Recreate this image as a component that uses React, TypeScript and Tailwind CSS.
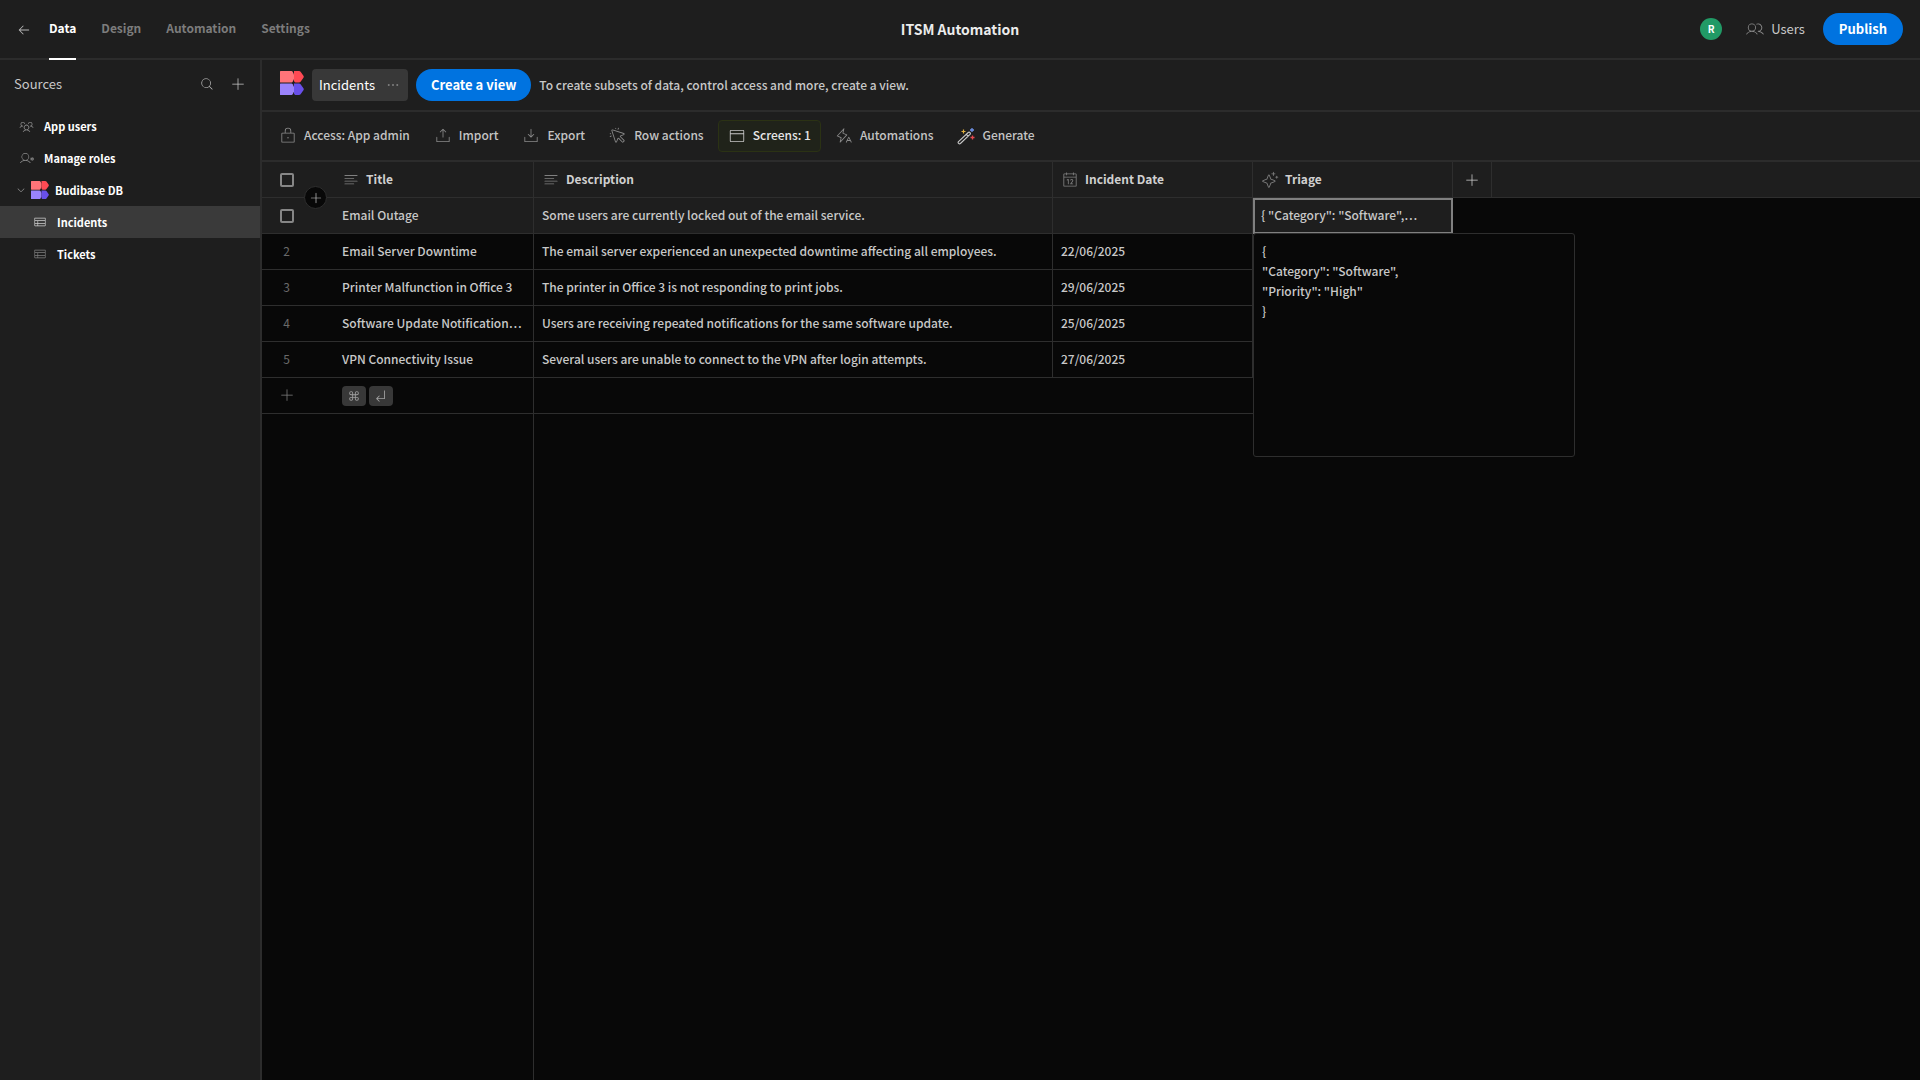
import type { ReactNode } from "react";
import {
  PiArrowElbowDownLeft, PiArrowLeft, PiBrowserLight, PiCalendarLight, PiCaretDownLight, PiCommand,
  PiCursorClickLight, PiDotsThreeBold, PiDownloadSimpleLight, PiLightningALight, PiLockLight,
  PiMagnifyingGlassLight, PiPlusLight, PiSparkleLight, PiTableLight, PiTextAlignLeftLight,
  PiUploadSimpleLight, PiUserGearLight, PiUsersLight, PiUsersThreeLight,
} from "react-icons/pi";

function Logo({ className }: { className: string }) {
  return (
    <svg viewBox="0 0 24 24" className={className} aria-hidden="true">
      <path d="M0 .5Q0 0 .5 0H11.500Q12.300 0 12.700 .8L14 3.500V8L12.700 10.700Q12.300 11.500 11.500 11.500H.5Q0 11.500 0 11Z" fill="#ff7479" />
      <path d="M14 0H19Q20 0 20.600 .8L23.600 5Q24 5.750 23.600 6.500L20.600 10.700Q20 11.500 19 11.500H15.500Q14.800 11.500 14.400 10.700L14 10Z" fill="#ff4a54" />
      <path d="M0 13Q0 12.500 .5 12.500H11.500Q12.300 12.500 12.700 13.300L14 16V20.500L12.700 23.200Q12.300 24 11.500 24H.5Q0 24 0 23.500Z" fill="#9a83fb" />
      <path d="M14 12.500H19Q20 12.500 20.600 13.300L23.600 17.500Q24 18.250 23.600 19L20.600 23.200Q20 24 19 24H15.500Q14.800 24 14.400 23.200L14 22.500Z" fill="#6950ea" />
    </svg>
  );
}

function Wand() {
  return (
    <svg viewBox="0 0 18 18" className="size-[18px]" fill="none" aria-hidden="true">
      <path d="M1.500 14.700 11.200 5.500Q12.200 4.800 13 5.600T13 7.400L3.400 16.500Q2.500 17.200 1.600 16.400T1.500 14.700ZM9.300 7.300 11.100 9.200" stroke="#c8c8c8" strokeWidth="1.100" />
      <path d="M6.500 2.500v4M4.500 4.500h4" stroke="#e0b040" strokeWidth="1.200" />
      <path d="M15 1v4M13 3h4" stroke="#6f93e8" strokeWidth="1.300" />
      <path d="M15.500 8.500v4M13.500 10.500h4" stroke="#e5484d" strokeWidth="1.300" />
    </svg>
  );
}

const tabs = ["Data", "Design", "Automation", "Settings"];

const rows = [
  { n: 2, title: "Email Server Downtime", text: "The email server experienced an unexpected downtime affecting all employees.", date: "22/06/2025" },
  { n: 3, title: "Printer Malfunction in Office 3", text: "The printer in Office 3 is not responding to print jobs.", date: "29/06/2025" },
  { n: 4, title: "Software Update Notification…", text: "Users are receiving repeated notifications for the same software update.", date: "25/06/2025" },
  { n: 5, title: "VPN Connectivity Issue", text: "Several users are unable to connect to the VPN after login attempts.", date: "27/06/2025" },
];

function Tool({ icon, children, active }: { icon: ReactNode; children: ReactNode; active?: boolean }) {
  return (
    <button
      className={
        active
          ? "flex h-8 items-center gap-[7px] rounded border border-[#2b3214] bg-[#20231a] px-[9px] text-[#e6e6e6] [&>svg]:text-[#c8c8c8]"
          : "flex h-8 items-center gap-[7px] rounded border border-transparent px-[9px] text-[#c4c4c4] [&>svg]:text-[#8a8a8a]"
      }
    >
      {icon}
      <span className="pb-0.5">{children}</span>
    </button>
  );
}

function Head({ icon, children }: { icon: ReactNode; children: ReactNode }) {
  return (
    <th className="h-9 border-r border-b border-[#2e2e2e] bg-[#1e1e1e] px-2 text-left text-[12px] font-bold">
      <div className="flex items-center gap-1.5 [&>svg]:size-[18px] [&>svg]:text-[#808080]">
        {icon}
        <span className="pb-0.5">{children}</span>
      </div>
    </th>
  );
}

function Check({ label }: { label: string }) {
  return (
    <input
      type="checkbox"
      aria-label={label}
      className="block size-[14px] appearance-none rounded-[2px] border-2 border-[#868686]"
    />
  );
}

const cell = "h-9 truncate border-r border-b border-[#2e2e2e] pr-0 pb-0.5 pl-2";

export default function App() {
  return (
    <div className="flex min-h-screen flex-col bg-[#1e1e1e] font-['Noto_Sans_CJK_SC',sans-serif] text-[13px] leading-5 text-[#c8c8c8]">
      <header className="grid h-[60px] grid-cols-[1fr_auto_1fr] border-b-2 border-[#2c2c2c]">
        <div className="flex pl-[17px]">
          <button aria-label="Back" className="mt-0.5 mr-[18px] self-center">
            <PiArrowLeft className="size-[14px] text-[#b8b8b8]" />
          </button>
          <nav className="flex gap-[25px] text-[12px] font-bold">
            {tabs.map((t, i) => (
              <a
                key={t}
                href="#"
                className={
                  i === 0
                    ? "-mb-0.5 flex items-center border-b-2 border-white pb-0.5 text-white"
                    : "-mb-0.5 flex items-center border-b-2 border-transparent pb-0.5 text-[#7c7c7c]"
                }
              >
                {t}
              </a>
            ))}
          </nav>
        </div>
        <h1 className="self-center text-[14px] font-bold text-[#ececec]">ITSM Automation</h1>
        <div className="flex items-center justify-end pr-[17px]">
          <span className="mr-6 flex size-[22px] items-center justify-center rounded-full bg-[#219a66] text-[10px] font-bold text-white">R</span>
          <button className="mr-[18px] flex items-center gap-[7px]">
            <PiUsersLight className="size-[18px] text-[#8a8a8a]" />
            Users
          </button>
          <button className="h-8 rounded-full bg-[#0073e0] px-4 font-bold text-white">Publish</button>
        </div>
      </header>

      <div className="flex min-h-0 flex-1">
        <aside className="w-[262px] shrink-0 border-r-2 border-[#2c2c2c]">
          <div className="flex h-[50px] items-center pr-[14px] pb-0.5 pl-[14px]">
            <h2 className="flex-1 text-[13px]">Sources</h2>
            <button aria-label="Search sources" className="mr-4">
              <PiMagnifyingGlassLight className="size-[14px]" />
            </button>
            <button aria-label="Add source">
              <PiPlusLight className="size-4" />
            </button>
          </div>
          <nav className="text-[11px] font-bold text-white">
            <a href="#" className="flex h-8 items-center gap-[10px] pl-[19px]">
              <PiUsersThreeLight className="size-[15px] text-[#8a8a8a]" />
              App users
            </a>
            <a href="#" className="flex h-8 items-center gap-[10px] pl-[19px]">
              <PiUserGearLight className="size-[15px] text-[#8a8a8a]" />
              Manage roles
            </a>
            <a href="#" className="flex h-8 items-center pl-4">
              <PiCaretDownLight className="mr-[5px] size-[10px] text-[#a0a0a0]" />
              <Logo className="mr-[6px] size-[18px]" />
              Budibase DB
            </a>
            <a href="#" className="flex h-8 items-center gap-[10px] bg-[#3a3a3a] pl-[33px]">
              <PiTableLight className="size-[14px] text-[#d0d0d0]" />
              Incidents
            </a>
            <a href="#" className="flex h-8 items-center gap-[10px] pl-[33px]">
              <PiTableLight className="size-[14px] text-[#808080]" />
              Tickets
            </a>
          </nav>
        </aside>

        <main className="flex min-w-0 flex-1 flex-col">
          <div className="flex h-[52px] items-center gap-2 border-b-2 border-[#2c2c2c] pl-[18px]">
            <Logo className="mb-1 size-6" />
            <div className="flex h-8 items-center gap-[10px] rounded bg-[#383838] px-[7px] text-white">
              Incidents
              <button aria-label="More options">
                <PiDotsThreeBold className="size-4 text-[#808080]" />
              </button>
            </div>
            <button className="h-8 rounded-full bg-[#0073e0] px-[15px] font-bold text-white">Create a view</button>
            <p className="text-[12px] font-medium">To create subsets of data, control access and more, create a view.</p>
          </div>

          <div className="flex h-[50px] items-center gap-1 border-b-2 border-[#2c2c2c] pl-[7px] text-[12px] font-medium">
            <Tool icon={<PiLockLight className="size-[18px]" />}>Access: App admin</Tool>
            <Tool icon={<PiUploadSimpleLight className="size-[18px]" />}>Import</Tool>
            <Tool icon={<PiDownloadSimpleLight className="size-[18px]" />}>Export</Tool>
            <Tool icon={<PiCursorClickLight className="size-[18px]" />}>Row actions</Tool>
            <Tool active icon={<PiBrowserLight className="size-[18px]" />}>Screens: 1</Tool>
            <Tool icon={<PiLightningALight className="size-[18px]" />}>Automations</Tool>
            <Tool icon={<Wand />}>Generate</Tool>
          </div>

          <div className="relative flex flex-1 bg-[#080808]">
            <table className="w-full table-fixed border-separate border-spacing-0 text-[12px] font-medium">
              <colgroup>
                <col className="w-[72px]" />
                <col className="w-[200px]" />
                <col className="w-[519px]" />
                <col className="w-[200px]" />
                <col className="w-[200px]" />
                <col className="w-[39px]" />
                <col />
              </colgroup>
              <thead className="text-[#d0d0d0]">
                <tr>
                  <th className="relative h-9 border-b border-[#2e2e2e] bg-[#1e1e1e] pl-[18px]">
                    <Check label="Select all rows" />
                    <button
                      aria-label="Insert row"
                      className="absolute top-6 left-[42px] z-10 flex size-[23px] items-center justify-center rounded-full border border-[#2e2e2e] bg-[#080808]"
                    >
                      <PiPlusLight className="size-[14px]" />
                    </button>
                  </th>
                  <Head icon={<PiTextAlignLeftLight />}>Title</Head>
                  <Head icon={<PiTextAlignLeftLight />}>Description</Head>
                  <Head icon={<PiCalendarLight />}>Incident Date</Head>
                  <Head icon={<PiSparkleLight />}>Triage</Head>
                  <th className="h-9 border-r border-b border-[#2e2e2e] bg-[#1e1e1e]">
                    <button aria-label="Add column" className="flex w-full items-center justify-center">
                      <PiPlusLight className="size-4" />
                    </button>
                  </th>
                  <th className="border-b border-[#2e2e2e] bg-[#1e1e1e]" />
                </tr>
              </thead>
              <tbody>
                <tr className="[&>td:nth-child(-n+5)]:bg-[#1e1e1e]">
                  <td className="h-9 border-b border-[#2e2e2e] pl-[18px]">
                    <Check label="Select Email Outage" />
                  </td>
                  <td className={cell}>Email Outage</td>
                  <td className={cell}>Some users are currently locked out of the email service.</td>
                  <td className={cell} />
                  <td className="relative h-9 p-0">
                    <div className="flex h-9 items-center border-2 border-[#808080] px-1.5 pb-0.5">
                      <span className="truncate">{'{ "Category": "Software",…'}</span>
                    </div>
                    <div className="absolute top-[35px] left-0 z-10 h-56 w-[322px] rounded-[3px] border border-[#2e2e2e] bg-[#080808] px-2 py-[7px] whitespace-pre-line">
                      {'{\n"Category": "Software",\n"Priority": "High"\n}'}
                    </div>
                  </td>
                </tr>
                {rows.map((r) => (
                  <tr key={r.n}>
                    <td className="h-9 border-b border-[#2e2e2e] pr-[23px] pb-0.5 text-center font-normal text-[#6a6a6a]">{r.n}</td>
                    <td className={cell}>{r.title}</td>
                    <td className={cell}>{r.text}</td>
                    <td className={cell}>{r.date}</td>
                    <td className={cell} />
                  </tr>
                ))}
                <tr>
                  <td className="h-9 border-b border-[#2e2e2e] pb-0.5 pl-[17px]">
                    <button aria-label="Add row" className="block">
                      <PiPlusLight className="size-4 text-[#808080]" />
                    </button>
                  </td>
                  <td className="h-9 border-r border-b border-[#2e2e2e] pl-2">
                    <div className="flex gap-[3px] text-[#a0a0a0]">
                      <kbd className="flex h-5 w-6 items-center justify-center rounded bg-[#383838]">
                        <PiCommand className="size-[14px]" />
                      </kbd>
                      <kbd className="flex h-5 w-6 items-center justify-center rounded bg-[#383838]">
                        <PiArrowElbowDownLeft className="size-[14px]" />
                      </kbd>
                    </div>
                  </td>
                  <td colSpan={3} className="border-b border-[#2e2e2e]" />
                </tr>
                <tr className="h-full">
                  <td />
                  <td className="border-r border-[#2e2e2e]" />
                </tr>
              </tbody>
            </table>
          </div>
        </main>
      </div>
    </div>
  );
}
